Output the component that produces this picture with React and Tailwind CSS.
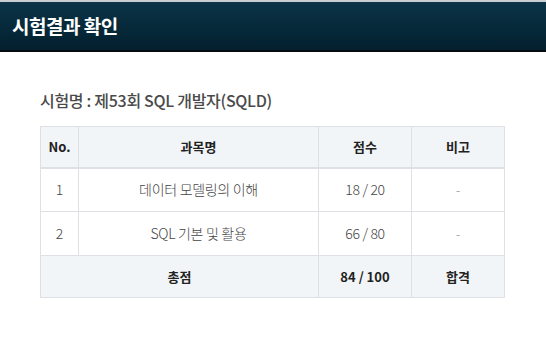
import React from "react";

const rows = [
  { no: "1", name: "데이터 모델링의 이해", score: "18 / 20", note: "-" },
  { no: "2", name: "SQL 기본 및 활용", score: "66 / 80", note: "-" },
];

export default function App() {
  return (
    <div
      className="w-[546px] h-[351px] bg-white"
      style={{ fontFamily: '"Noto Sans CJK KR", "Noto Sans", sans-serif' }}
    >
      <header className="h-[52px] border-t-2 border-[#c9ced2] border-b-2 border-b-[#050b0f] bg-gradient-to-b from-[#0b3448] to-[#03202e] flex items-center px-3">
        <h1 className="text-[19px] font-bold text-white tracking-[-0.5px]">시험결과 확인</h1>
      </header>

      <section className="px-10 pt-[35px]">
        <h2 className="text-[16px] font-medium text-[#4a4a4a] tracking-[-0.3px] leading-[26px]">
          시험명 : 제53회 SQL 개발자(SQLD)
        </h2>

        <table className="mt-[13px] w-[465px] border-collapse text-[13px] text-center">
          <thead>
            <tr className="bg-[#f2f5f7] h-[41px] text-[#222] font-bold">
              <th className="w-[38px] border border-[#dde1e5] border-b-2">No.</th>
              <th className="w-[240px] border border-[#dde1e5] border-b-2">과목명</th>
              <th className="w-[93px] border border-[#dde1e5] border-b-2">점수</th>
              <th className="border border-[#dde1e5] border-b-2">비고</th>
            </tr>
          </thead>
          <tbody className="text-[#444] text-[14px] font-light">
            {rows.map((r) => (
              <tr key={r.no} className="h-[44px]">
                <td className="border border-[#dde1e5]">{r.no}</td>
                <td className="border border-[#dde1e5] tracking-[-0.3px]">{r.name}</td>
                <td className="border border-[#dde1e5] tracking-[-0.3px]">{r.score}</td>
                <td className="border border-[#dde1e5] text-[#999]">{r.note}</td>
              </tr>
            ))}
            <tr className="h-[42px] bg-[#f2f5f7] text-[#222] text-[13px] font-bold">
              <td colSpan={2} className="border border-[#dde1e5]">총점</td>
              <td className="border border-[#dde1e5]">84 / 100</td>
              <td className="border border-[#dde1e5]">합격</td>
            </tr>
          </tbody>
        </table>
      </section>
    </div>
  );
}
